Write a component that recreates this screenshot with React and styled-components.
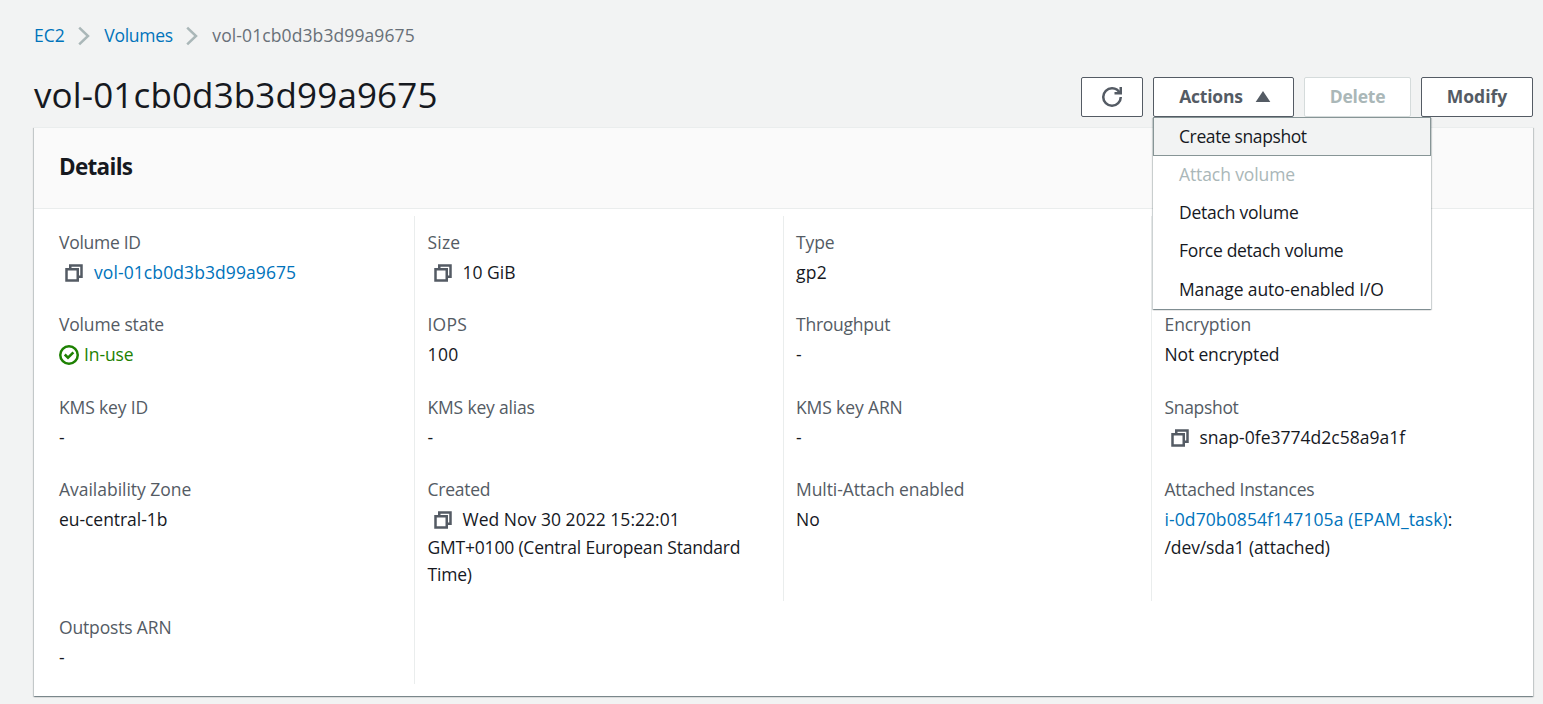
import React from 'react';
import styled, { createGlobalStyle } from 'styled-components';

const color = {
  text: '#16191f',
  label: '#545b64',
  muted: '#687078',
  link: '#0073bb',
  disabled: '#aab7b8',
  success: '#1d8102',
  line: '#eaeded',
  page: '#f2f3f3',
};

const GlobalStyle = createGlobalStyle`
  *, *::before, *::after { box-sizing: border-box; }
  body {
    margin: 0;
    background: ${color.page};
    color: ${color.text};
    font: 450 17.5px/27.5px "Open Sans", "Noto Sans", sans-serif;
  }
`;

const Page = styled.main`
  height: 704px;
  padding: 22px 10px 0 34px;
  overflow: hidden;
`;

const Tracked = styled.span`
  letter-spacing: ${(p) => p.$track || 0}px;
  white-space: nowrap;
`;

const Breadcrumbs = styled.nav`
  display: flex;
  align-items: center;
  height: 28px;
  color: ${color.muted};
`;

const Link = styled.a`
  color: ${color.link};
  text-decoration: none;
  letter-spacing: ${(p) => p.$track || 0}px;
`;

const Separator = styled.svg`
  width: 12px;
  height: 20px;
  margin: 0 14px 0 13.5px;
  fill: none;
  stroke: ${color.disabled};
  stroke-width: 2.5;
`;

const TitleBar = styled.header`
  display: flex;
  align-items: flex-start;
  justify-content: space-between;
  height: 77px;
  padding-top: 27px;
`;

const Title = styled.h1`
  margin: -1px 0 0;
  font-size: 35px;
  font-weight: 400;
  line-height: 38px;
  letter-spacing: 0.14px;
`;

const Toolbar = styled.div`
  display: flex;
  gap: 10px;
`;

const Button = styled.button`
  display: flex;
  align-items: center;
  justify-content: center;
  width: ${(p) => p.$width}px;
  height: 40px;
  padding: 0 0 0 ${(p) => p.$indent || 0}px;
  border: 1px solid ${(p) => (p.disabled ? '#d5dbdb' : color.label)};
  border-radius: 2px;
  background: #fff;
  color: ${(p) => (p.disabled ? color.disabled : color.label)};
  font: 700 17.5px/25px "Open Sans", "Noto Sans", sans-serif;
  letter-spacing: ${(p) => p.$track || 0}px;
`;

const ButtonText = styled.span`
  padding-bottom: 2px;
`;

const Dropdown = styled.div`
  position: relative;
`;

const Menu = styled.ul`
  position: absolute;
  z-index: 2;
  top: 40px;
  left: 0;
  width: 278px;
  height: 192px;
  margin: 0;
  padding: 0;
  list-style: none;
  background: #fff;
  box-shadow: 0 1px 1px 0 rgba(0, 28, 36, 0.3), 1px 1px 1px 0 rgba(0, 28, 36, 0.15),
    -1px 1px 1px 0 rgba(0, 28, 36, 0.15);
`;

const MenuItem = styled.li`
  height: ${(p) => (p.$active ? 39 : 38)}px;
  margin-bottom: ${(p) => (p.$active ? -1 : 0)}px;
  padding: 5px 25px;
  border: 1px solid ${(p) => (p.$active ? '#879596' : 'transparent')};
  background: ${(p) => (p.$active ? color.page : 'transparent')};
  color: ${(p) => (p.$disabled ? color.disabled : color.text)};
  letter-spacing: ${(p) => p.$track || 0}px;

  &:last-child {
    padding-top: 6px;
  }
`;

const Panel = styled.section`
  height: 569px;
  background: #fff;
  border-top: 1px solid ${color.line};
  box-shadow: 0 1px 1px 0 rgba(0, 28, 36, 0.3), 1px 1px 1px 0 rgba(0, 28, 36, 0.15),
    -1px 1px 1px 0 rgba(0, 28, 36, 0.15);
`;

const PanelHeader = styled.div`
  height: 81px;
  padding: 24px 25px;
  background: #fafafa;
  border-bottom: 1px solid ${color.line};
`;

const PanelTitle = styled.h2`
  margin: 0;
  font-size: 22.5px;
  font-weight: 700;
  line-height: 30px;
  letter-spacing: -0.7px;
`;

const Grid = styled.div`
  display: grid;
  grid-template-columns: repeat(4, 1fr);
  padding: 7px 12.5px 12.5px;
`;

const Cell = styled.div`
  display: grid;
  grid-auto-rows: min-content;
  gap: 2.5px;
  padding: 12.5px;
  border-right: 1px solid ${(p) => (p.$last ? 'transparent' : color.line)};
`;

const Label = styled.div`
  color: ${color.label};
  letter-spacing: ${(p) => p.$track || 0}px;
`;

const Value = styled.div`
  white-space: nowrap;
`;

const Line = styled.div`
  display: flex;
  align-items: center;
  height: 27.5px;
  color: ${(p) => (p.$success ? color.success : 'inherit')};
`;

const Icon = styled.svg.attrs({ viewBox: '0 0 16 16' })`
  width: 20px;
  height: 20px;
  flex: none;
  fill: none;
  stroke: currentColor;
  stroke-width: 2;
`;

const CopySlot = styled.span`
  display: flex;
  padding: 1px 10px 0 5px;
  color: ${color.label};
`;

const StatusSlot = styled.span`
  display: flex;
  padding-right: 5px;
`;

const Caret = styled(Icon)`
  margin-left: 10px;
  fill: currentColor;
`;

const RefreshIcon = () => (
  <Icon>
    <path d="M10 5h5V0" />
    <path d="M15 8a6.957 6.957 0 0 1-7 7 6.957 6.957 0 0 1-7-7 6.957 6.957 0 0 1 7-7 6.87 6.87 0 0 1 6.3 4" />
  </Icon>
);

const CopyIcon = () => (
  <CopySlot>
    <Icon>
      <path d="M2 5h9v9H2z" />
      <path d="M5 5V2h9v9h-3" />
    </Icon>
  </CopySlot>
);

const CheckIcon = () => (
  <StatusSlot>
    <Icon>
      <circle cx="8" cy="8" r="7" />
      <path d="m4.6 7.6 2.6 2.6 4.3-4.3" />
    </Icon>
  </StatusSlot>
);

const Chevron = () => (
  <Separator viewBox="0 0 12 20">
    <path d="M1.2 1.6 10 10l-8.8 8.4" />
  </Separator>
);

const menu = [
  { text: 'Create snapshot', track: -0.4, active: true },
  { text: 'Attach volume', track: -0.1, disabled: true },
  { text: 'Detach volume', track: -0.24 },
  { text: 'Force detach volume', track: -0.3 },
  { text: 'Manage auto-enabled I/O', track: -0.14 },
];

const fields = [
  { label: 'Volume ID', track: -0.28, copy: true, link: true, lines: [['vol-01cb0d3b3d99a9675', 0.09]] },
  { label: 'Size', track: 0.2, copy: true, lines: [['10 GiB', 0]] },
  { label: 'Type', track: -0.1, lines: [['gp2', 0.3]] },
  { label: '', lines: [] },
  { label: 'Volume state', track: -0.18, success: true, lines: [['In-use', -0.1]] },
  { label: 'IOPS', track: 0.2, lines: [['100', 0.4]] },
  { label: 'Throughput', track: -0.24, lines: [['-']] },
  { label: 'Encryption', track: -0.08, lines: [['Not encrypted', -0.15]] },
  { label: 'KMS key ID', track: -0.15, lines: [['-']] },
  { label: 'KMS key alias', track: -0.18, lines: [['-']] },
  { label: 'KMS key ARN', track: -0.12, lines: [['-']] },
  { label: 'Snapshot', track: -0.32, copy: true, lines: [['snap-0fe3774d2c58a9a1f', 0.02]] },
  { label: 'Availability Zone', track: -0.02, lines: [['eu-central-1b', -0.05]] },
  {
    label: 'Created',
    track: -0.25,
    copy: true,
    lines: [
      ['Wed Nov 30 2022 15:22:01', 0.03],
      ['GMT+0100 (Central European Standard', -0.2],
      ['Time)', -0.2],
    ],
  },
  { label: 'Multi-Attach enabled', track: -0.08, lines: [['No', 0]] },
  {
    label: 'Attached Instances',
    track: -0.27,
    link: true,
    suffix: ':',
    lines: [
      ['i-0d70b0854f147105a (EPAM_task)', 0.1],
      ['/dev/sda1 (attached)', -0.1],
    ],
  },
  { label: 'Outposts ARN', track: -0.16, lines: [['-']] },
];

const Field = ({ field, last }) => (
  <Cell $last={last}>
    <Label $track={field.track}>{field.label}</Label>
    <Value>
      {field.lines.map(([text, track], i) => (
        <Line key={text} $success={field.success}>
          {i === 0 && field.copy && <CopyIcon />}
          {i === 0 && field.success && <CheckIcon />}
          {i === 0 && field.link ? (
            <Link $track={track}>{text}</Link>
          ) : (
            <Tracked $track={track}>{text}</Tracked>
          )}
          {i === 0 && field.suffix}
        </Line>
      ))}
    </Value>
  </Cell>
);

export default function App() {
  return (
    <Page>
      <GlobalStyle />
      <Breadcrumbs>
        <Link $track={0}>EC2</Link>
        <Chevron />
        <Link $track={-0.27}>Volumes</Link>
        <Chevron />
        <Tracked $track={0.1}>vol-01cb0d3b3d99a9675</Tracked>
      </Breadcrumbs>
      <TitleBar>
        <Title>vol-01cb0d3b3d99a9675</Title>
        <Toolbar>
          <Button $width={62} aria-label="Refresh">
            <RefreshIcon />
          </Button>
          <Dropdown>
            <Button $width={141} $track={-0.22} $indent={5}>
              <ButtonText>Actions</ButtonText>
              <Caret>
                <path d="M4 11h8L8 5l-4 6z" />
              </Caret>
            </Button>
            <Menu>
              {menu.map((item) => (
                <MenuItem
                  key={item.text}
                  $active={item.active}
                  $disabled={item.disabled}
                  $track={item.track}
                >
                  {item.text}
                </MenuItem>
              ))}
            </Menu>
          </Dropdown>
          <Button $width={107} $track={-0.2} disabled>
            <ButtonText>Delete</ButtonText>
          </Button>
          <Button $width={112} $track={0}>
            <ButtonText>Modify</ButtonText>
          </Button>
        </Toolbar>
      </TitleBar>
      <Panel>
        <PanelHeader>
          <PanelTitle>Details</PanelTitle>
        </PanelHeader>
        <Grid>
          {fields.map((field, i) => (
            <Field key={field.label} field={field} last={i % 4 === 3} />
          ))}
        </Grid>
      </Panel>
    </Page>
  );
}
